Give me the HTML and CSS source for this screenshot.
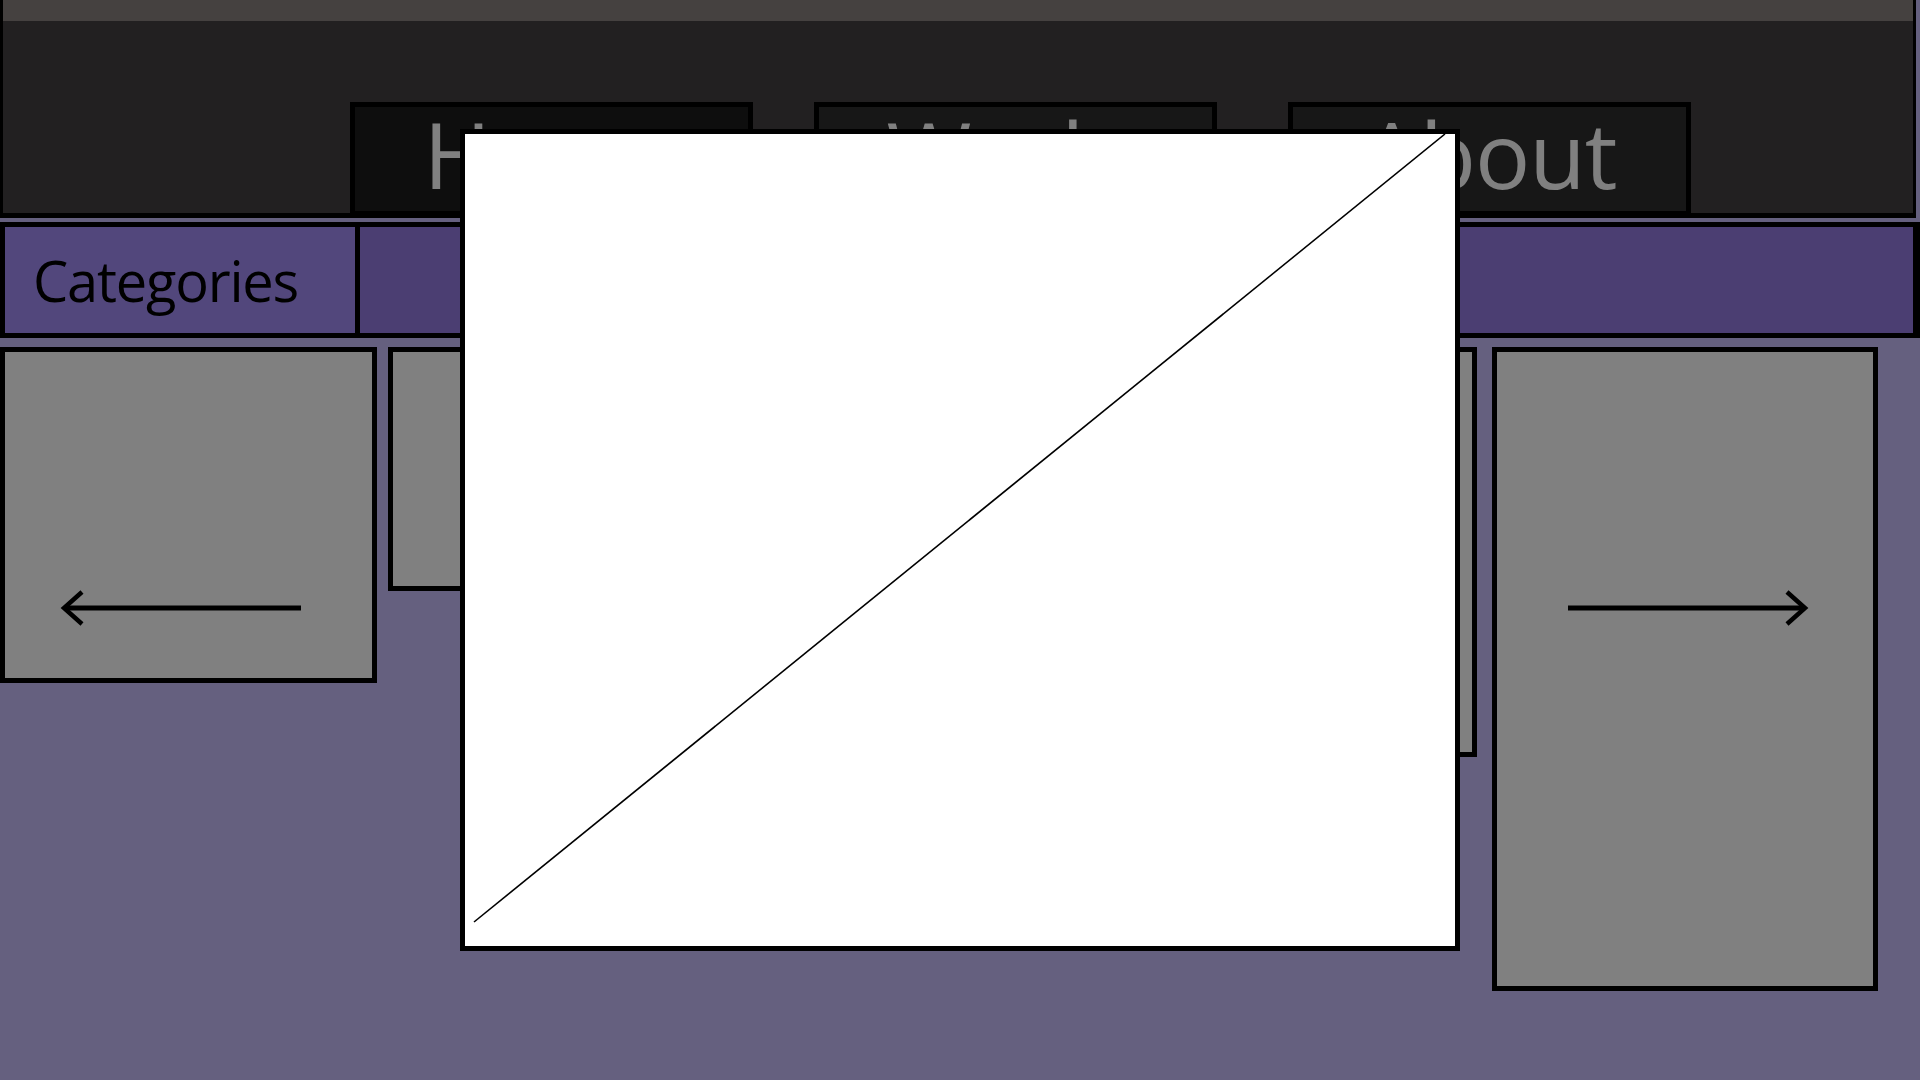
FILE: index.html
```html
<!DOCTYPE html>
<html lang="en">
<head>
<meta charset="utf-8">
<title>Gallery</title>
<link rel="stylesheet" href="styles.css">
</head>
<body>
<header class="site-header">
  <div class="header-strip"></div>
  <nav class="main-nav">
    <a class="nav-item nav-item--active nav-home" href="#">Home</a>
    <a class="nav-item nav-work" href="#">Work</a>
    <a class="nav-item nav-about" href="#">About</a>
  </nav>
</header>

<section class="category-bar">
  <div class="category-label">Categories</div>
  <div class="category-fill"></div>
</section>

<main class="gallery">
  <div class="tile tile-prev">
    <svg class="arrow" width="244" height="40" viewBox="0 0 244 40">
      <line x1="4" y1="20" x2="241" y2="20" stroke="#000" stroke-width="5"/>
      <polyline points="22,4 4,20 22,36" fill="none" stroke="#000" stroke-width="4.5" stroke-linejoin="miter"/>
    </svg>
  </div>
  <div class="tile tile-b"></div>
  <div class="tile tile-c"></div>
  <div class="tile tile-next">
    <svg class="arrow" width="244" height="40" viewBox="0 0 244 40">
      <line x1="2" y1="20" x2="239" y2="20" stroke="#000" stroke-width="5"/>
      <polyline points="221,4 239,20 221,36" fill="none" stroke="#000" stroke-width="4.5" stroke-linejoin="miter"/>
    </svg>
  </div>
</main>

<div class="modal">
  <svg class="modal-art" width="990" height="812" viewBox="0 0 990 812">
    <line x1="9" y1="788" x2="980" y2="0" stroke="#000" stroke-width="1.6"/>
  </svg>
</div>
</body>
</html>
```

FILE: styles.css
```css
* {
  box-sizing: border-box;
}

html, body {
  margin: 0;
  padding: 0;
}

body {
  width: 1920px;
  height: 1080px;
  overflow: hidden;
  background: #65607f;
  font-family: "Open Sans", "Noto Sans", sans-serif;
}

/* Header */
.site-header {
  width: 1916px;
  height: 218px;
  background: #222021;
  border-style: solid;
  border-color: #000;
  border-width: 0 3px 5px 3px;
}

.header-strip {
  height: 21px;
  background: #454140;
}

.main-nav {
  display: flex;
  height: 192px;
  padding: 81px 0 0 347px;
}

.nav-item {
  display: block;
  width: 403px;
  height: 111px;
  padding-top: 1px;
  border-style: solid;
  border-color: #000;
  border-width: 5px 5px 2px 5px;
  background: #171717;
  color: #808080;
  text-decoration: none;
  text-align: center;
  font-size: 92px;
  line-height: 92px;
  letter-spacing: -1px;
}

.nav-item--active {
  background: #0e0e0e;
}

.nav-home {
  margin-right: 61px;
}

.nav-work {
  margin-right: 71px;
  padding-right: 36px;
}

/* Category bar */
.category-bar {
  display: flex;
  width: 1920px;
  height: 116px;
  margin-top: 4px;
  border-style: solid;
  border-color: #000;
  border-width: 5px 7px 5px 5px;
  background: #4b3e72;
}

.category-label {
  display: flex;
  align-items: center;
  width: 355px;
  padding-left: 28px;
  border-right: 5px solid #000;
  background: #52477c;
  color: #000;
  font-size: 56px;
  letter-spacing: -1.2px;
}

.category-fill {
  flex: 1;
}

/* Gallery */
.gallery {
  display: flex;
  align-items: flex-start;
  margin-top: 9px;
}

.tile {
  flex: none;
  border: 5px solid #000;
  background: #808080;
}

.tile-prev {
  width: 377px;
  height: 336px;
  margin-right: 11px;
  padding: 236px 0 0 55px;
}

.tile-b {
  width: 540px;
  height: 244px;
  margin-right: 11px;
}

.tile-c {
  width: 538px;
  height: 410px;
  margin-right: 15px;
}

.tile-next {
  width: 386px;
  height: 644px;
  padding: 236px 0 0 69px;
}

.arrow {
  display: block;
}

/* Modal overlay */
.modal {
  position: fixed;
  left: 460px;
  top: 129px;
  width: 1000px;
  height: 822px;
  border: 5px solid #000;
  background: #fff;
}

.modal-art {
  display: block;
}
```
